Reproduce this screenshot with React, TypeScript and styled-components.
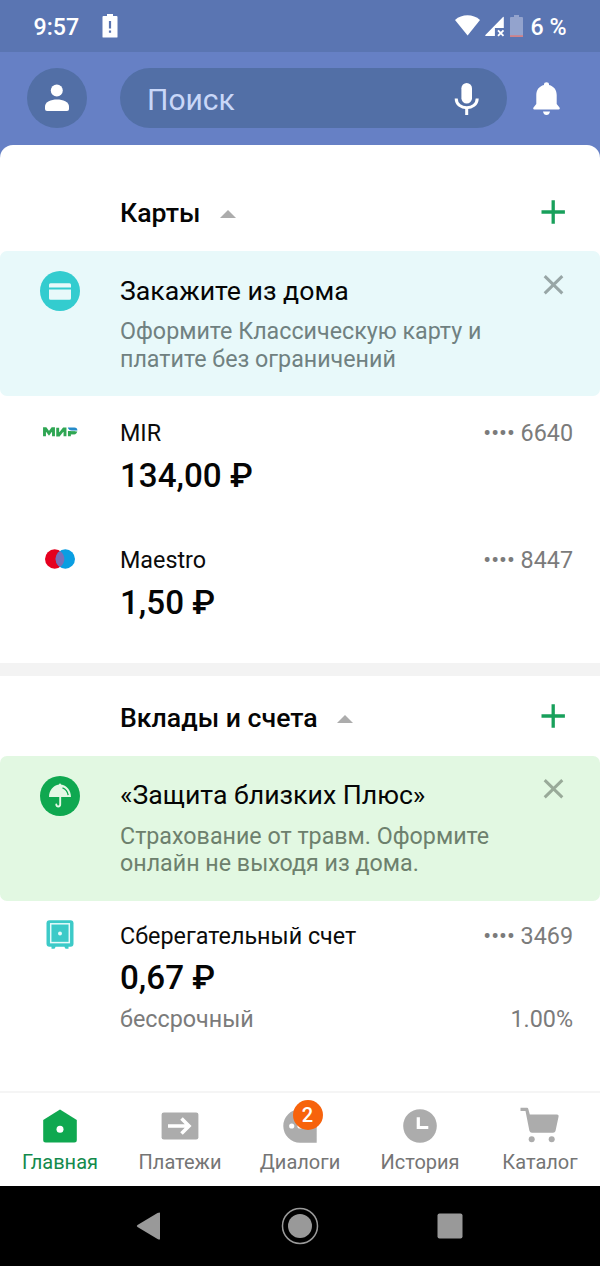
import React from 'react';
import styled, { createGlobalStyle } from 'styled-components';

const GlobalStyle = createGlobalStyle`
  * { box-sizing: border-box; }
  body { margin: 0; background: #000; }
  button { border: 0; padding: 0; background: none; font: inherit; color: inherit; }
`;

const Screen = styled.div`
  width: 600px;
  height: 1266px;
  display: flex;
  flex-direction: column;
  overflow: hidden;
  background: #fff;
  color: #050505;
  font-family: Roboto, 'Liberation Sans', sans-serif;
  svg { display: block; flex: none; }
`;

const StatusBar = styled.div`
  height: 52px;
  flex: none;
  display: flex;
  align-items: center;
  padding: 2px 33.5px 0 33.5px;
  background: #5a75b2;
  color: #fff;
  font-size: 23.2px;
  font-weight: 500;
`;

const BatteryAlert = styled.svg`
  margin: 0 0 2px 22.5px;
`;

const StatusIcons = styled.div`
  margin-left: auto;
  display: flex;
  align-items: center;
`;

const BatteryLevel = styled.svg`
  margin: 0 0 1px -6px;
`;

const BatteryText = styled.span`
  margin-left: 7.5px;
`;

const TopBar = styled.header`
  height: 113px;
  flex: none;
  margin-bottom: -20px;
  display: flex;
  align-items: flex-start;
  padding: 16px 27px 0;
  background: #6680c5;
`;

const Avatar = styled.button`
  width: 60px;
  height: 60px;
  border-radius: 50%;
  background: #526fa6;
  display: grid;
  place-items: center;
`;

const Search = styled.div`
  width: 387px;
  height: 60px;
  margin-left: 33px;
  border-radius: 30px;
  background: #526fa6;
  display: flex;
  align-items: center;
  justify-content: space-between;
  padding: 3px 26px 0 27px;
  color: #c9d7f8;
  font-size: 30px;
`;

const Bell = styled.button`
  height: 60px;
  margin-left: 26px;
  padding-top: 1px;
  display: flex;
  align-items: center;
`;

const Content = styled.main`
  flex: 1;
  min-height: 0;
  position: relative;
  overflow: hidden;
  background: #fff;
  border-radius: 13px 13px 0 0;
  padding-top: 26.4px;
`;

const SectionHeader = styled.div`
  height: 80px;
  display: flex;
  align-items: center;
  padding: 3.2px 34px 0 120px;
`;

const SectionTitle = styled.h2`
  margin: 0 19.5px 0 0;
  font-size: 26.67px;
  font-weight: 500;
  line-height: 32px;
`;

const Triangle = styled.svg`
  margin-top: 2px;
`;

const AddButton = styled.button`
  margin-left: auto;
  padding-bottom: 2.6px;
`;

const Banner = styled.div<{ $bg: string }>`
  height: 145px;
  border-radius: 7px;
  background: ${(p) => p.$bg};
  display: flex;
  padding: 20px 36px 0 40px;
`;

const BannerBody = styled.div`
  width: 400px;
  margin-left: 40px;
`;

const BannerTitle = styled.div`
  font-size: 26.67px;
  line-height: 32px;
  padding-top: 3.2px;
`;

const BannerText = styled.div<{ $color: string }>`
  margin-top: 11.9px;
  font-size: 23.25px;
  line-height: 27.3px;
  color: ${(p) => p.$color};
`;

const CloseButton = styled.button`
  margin-left: auto;
  align-self: flex-start;
  padding-top: 3.5px;
`;

const Product = styled.div<{ $top: number }>`
  height: 126.7px;
  display: flex;
  padding: ${(p) => p.$top}px 27px 0 0;
`;

const ProductIcon = styled.div`
  width: 120px;
  height: 28px;
  display: flex;
  align-items: center;
  justify-content: center;
`;

const ProductInfo = styled.div`
  flex: 1;
`;

const Line = styled.div<{ $muted?: boolean }>`
  display: flex;
  justify-content: space-between;
  font-size: 23.33px;
  line-height: 30px;
  color: ${(p) => (p.$muted ? '#7b7b7b' : '#0b0b0b')};
`;

const Muted = styled.span`
  color: #7b7b7b;
`;

const Amount = styled.div`
  font-size: 33.2px;
  font-weight: 500;
  line-height: 40px;
  margin: 7.8px 0 6px;
`;

const Divider = styled.div`
  height: 13.3px;
  margin-top: 12.9px;
  background: #f3f3f3;
`;

const TabBar = styled.nav`
  height: 95px;
  flex: none;
  display: flex;
  border-top: 2px solid #f5f5f5;
  background: #fff;
`;

const Tab = styled.button<{ $active?: boolean }>`
  width: 120px;
  display: flex;
  flex-direction: column;
  align-items: center;
  padding-top: 13px;
  font-size: 20px;
  line-height: 24px;
  color: ${(p) => (p.$active ? '#138a4c' : '#757575')};
`;

const TabIcon = styled.div`
  position: relative;
  width: 40px;
  height: 40px;
  margin-bottom: 4.4px;
`;

const Badge = styled.span`
  position: absolute;
  left: 12.5px;
  top: -6px;
  width: 30px;
  height: 30px;
  border-radius: 50%;
  background: #f7630c;
  color: #fff;
  font-size: 20px;
  font-weight: 500;
  line-height: 31px;
  text-align: center;
`;

const SystemBar = styled.footer`
  height: 80px;
  flex: none;
  display: flex;
  align-items: center;
  justify-content: center;
  gap: 117px;
  background: #000;
`;

const Collapse = () => (
  <Triangle width="16" height="8" viewBox="0 0 16 8"><path d="M0 8 8 0l8 8z" fill="#acacac" /></Triangle>
);

const Plus = () => (
  <svg width="26" height="26" viewBox="0 0 26 26"><path d="M1.500 13h23.400M13.200 1.300v23.400" stroke="#18a05b" strokeWidth="3.300" /></svg>
);

const Cross = ({ color }: { color: string }) => (
  <svg width="21" height="20" viewBox="0 0 21 20"><path d="M1.700 1.200 19.300 18.300M19.300 1.200 1.700 18.300" stroke={color} strokeWidth="3" /></svg>
);

const CardIcon = () => (
  <svg width="40" height="40" viewBox="0 0 40 40">
    <circle cx="20" cy="20" r="20" fill="#33cccf" />
    <path d="M10.500 12.300h19a1.500 1.500 0 0 1 1.500 1.500v2.700H9v-2.700a1.500 1.500 0 0 1 1.500-1.500zM9 18.500h22v8.700a1.500 1.500 0 0 1-1.500 1.500h-19A1.500 1.500 0 0 1 9 27.200z" fill="#e8f9fa" />
  </svg>
);

const UmbrellaIcon = () => (
  <svg width="40" height="40" viewBox="0 0 40 40">
    <circle cx="20" cy="20" r="20" fill="#0fa850" />
    <path d="M19 8.500a1 1 0 0 1 2 0C26.500 9.300 31 14 31 21H9C9 14 13.500 9.300 19 8.500z" fill="#e5f8e5" />
    <path d="M22.500 11.800C25.500 13 27.700 16 28.200 19.200" fill="none" stroke="#0fa850" strokeWidth="1.300" />
    <path d="M20.200 20v8.300c0 3-3.900 2.900-3.900.2" fill="none" stroke="#e5f8e5" strokeWidth="1.900" strokeLinecap="round" />
  </svg>
);

const MirLogo = () => (
  <svg width="35" height="10" viewBox="0 0 35 10">
    <g fill="none" stroke="#2fa653" strokeWidth="2.900">
      <path d="M1.500 9.200V1.700h1.100L6 6.400l3.400-4.700H10.500v7.500" />
      <path d="M14.700.8v7.300h1.200L20.800 1.900H22v7.300" />
      <path d="M26.400 4v5.200M26.400 5.700h6" />
    </g>
    <path d="M24.800.6h6.600c1.900 0 3 1.200 3 2.900h-5.500c-2.100 0-3.600-1-4.100-2.900z" fill="#258bc9" />
    <path d="M28 4.500h6.300c-.4 1.500-1.500 2.700-3 2.700H27z" fill="#2fa653" />
  </svg>
);

const MaestroLogo = () => (
  <svg width="30" height="20" viewBox="0 0 30 20">
    <circle cx="9.700" cy="10" r="9.700" fill="#e6001f" />
    <circle cx="20.300" cy="10" r="9.700" fill="#0a9ee2" />
    <path d="M15 1.900a9.700 9.700 0 0 1 0 16.200 9.700 9.700 0 0 1 0-16.200z" fill="#7a6fb8" />
  </svg>
);

const SafeIcon = () => (
  <svg width="28" height="30" viewBox="0 0 28 30">
    <rect x=".5" y=".2" width="27" height="26.500" rx="3" fill="#3ccac8" />
    <path d="M5.500 25.500h4v1.500l-1 1.700h-3zM18.500 25.500h4v3.200h-3l-1-1.700z" fill="#3ccac8" />
    <rect x="4.700" y="3.800" width="18.600" height="18.800" fill="none" stroke="#e6fafa" strokeWidth="1.500" />
    <circle cx="14" cy="13.500" r="2" fill="#e6fafa" />
  </svg>
);

export default function App() {
  return (
    <Screen>
      <GlobalStyle />
      <StatusBar>
        9:57
        <BatteryAlert width="16" height="24" viewBox="0 0 16 24">
          <path d="M5 0h6v2h3.500q1 0 1 1v20q0 .6-1 .6h-13q-1 0-1-.6V3q0-1 1-1H5z" fill="#fff" />
          <path d="M8 7v7.500M8 16.500v2.200" stroke="#5a75b2" strokeWidth="2.200" />
        </BatteryAlert>
        <StatusIcons>
          <svg width="62" height="24" viewBox="0 0 62 24">
            <path d="M1 5C8-1.200 19-1.200 26 5L13.600 20.500z" fill="#fff" />
            <path d="M49.800 2.400q0-.9-.8-.3L31.400 19.900q-.8 1.100.5 1.100h9v-8h8.900z" fill="#fff" />
            <path d="m44 15.300 5.500 5.500m0-5.500L44 20.800" stroke="#fff" strokeWidth="1.900" />
          </svg>
          <BatteryLevel width="13" height="23" viewBox="0 0 13 23">
            <path d="M4 0h5v2h3q1 0 1 1v19H0V3q0-1 1-1h3z" fill="#93a3cd" />
            <path d="M0 20.200h13V22H0z" fill="#cf8289" />
          </BatteryLevel>
          <BatteryText>6 %</BatteryText>
        </StatusIcons>
      </StatusBar>

      <TopBar>
        <Avatar aria-label="Профиль">
          <svg width="24" height="28" viewBox="0 0 24 28">
            <circle cx="11.800" cy="6.500" r="6" fill="#fff" />
            <path d="M0 22.500C0 13 24 13 24 22.500V25q0 2-2 2H2q-2 0-2-2z" fill="#fff" />
          </svg>
        </Avatar>
        <Search>
          Поиск
          <svg width="28" height="34" viewBox="0 0 28 34">
            <rect x="8.400" y="0" width="10.600" height="20.500" rx="5.300" fill="#fff" />
            <path d="M3.200 15.500c0 12.300 21 12.300 21 0M13.700 24.500V32" fill="none" stroke="#fff" strokeWidth="3" />
          </svg>
        </Search>
        <Bell aria-label="Уведомления">
          <svg width="27" height="34" viewBox="0 0 27 34">
            <path d="M11 3V2q0-1.700 2.500-1.700T16 2v1c5 1.300 7.700 5 7.700 10v9l2.800 3.500q.9 2-.9 2H1.400q-1.800 0-.9-2L3.300 22v-9c0-5 2.700-8.700 7.700-10zM10 29.500h7q-.7 3.500-3.500 3.500T10 29.500z" fill="#fff" />
          </svg>
        </Bell>
      </TopBar>

      <Content>
        <SectionHeader>
          <SectionTitle>Карты</SectionTitle>
          <Collapse />
          <AddButton aria-label="Добавить"><Plus /></AddButton>
        </SectionHeader>
        <Banner $bg="#e8f9fa">
          <CardIcon />
          <BannerBody>
            <BannerTitle>Закажите из дома</BannerTitle>
            <BannerText $color="#708181">Оформите Классическую карту и<br />платите без ограничений</BannerText>
          </BannerBody>
          <CloseButton aria-label="Закрыть"><Cross color="#98a6a6" /></CloseButton>
        </Banner>
        <Product $top={21.9}>
          <ProductIcon><MirLogo /></ProductIcon>
          <ProductInfo>
            <Line>MIR<Muted>•••• 6640</Muted></Line>
            <Amount>134,00 ₽</Amount>
          </ProductInfo>
        </Product>
        <Product $top={21.9}>
          <ProductIcon><MaestroLogo /></ProductIcon>
          <ProductInfo>
            <Line>Maestro<Muted>•••• 8447</Muted></Line>
            <Amount>1,50 ₽</Amount>
          </ProductInfo>
        </Product>
        <Divider />
        <SectionHeader>
          <SectionTitle>Вклады и счета</SectionTitle>
          <Collapse />
          <AddButton aria-label="Добавить"><Plus /></AddButton>
        </SectionHeader>
        <Banner $bg="#e2f8e2">
          <UmbrellaIcon />
          <BannerBody>
            <BannerTitle>«Защита близких Плюс»</BannerTitle>
            <BannerText $color="#6d806d">Страхование от травм. Оформите<br />онлайн не выходя из дома.</BannerText>
          </BannerBody>
          <CloseButton aria-label="Закрыть"><Cross color="#99aa99" /></CloseButton>
        </Banner>
        <Product $top={19.6}>
          <ProductIcon><SafeIcon /></ProductIcon>
          <ProductInfo>
            <Line>Сберегательный счет<Muted>•••• 3469</Muted></Line>
            <Amount>0,67 ₽</Amount>
            <Line $muted><span>бессрочный</span><span>1.00%</span></Line>
          </ProductInfo>
        </Product>
      </Content>

      <TabBar>
        <Tab $active>
          <TabIcon>
            <svg width="40" height="40" viewBox="0 0 40 40">
              <path d="M20 3.500 36.800 14v20q0 2.500-2.500 2.500H5.700Q3.200 36.500 3.200 34V14z" fill="#0fa850" />
              <circle cx="20" cy="23.300" r="3.500" fill="#fff" />
            </svg>
          </TabIcon>
          Главная
        </Tab>
        <Tab>
          <TabIcon>
            <svg width="40" height="40" viewBox="0 0 40 40">
              <rect x="1.600" y="6.600" width="36.800" height="26.800" rx="2.200" fill="#acacac" />
              <path d="M8 20h21M21.500 12.500 29 20l-7.500 7.500" fill="none" stroke="#fff" strokeWidth="3.600" />
            </svg>
          </TabIcon>
          Платежи
        </Tab>
        <Tab>
          <TabIcon>
            <svg width="40" height="40" viewBox="0 0 40 40">
              <path d="M36.700 36.700H20A16.700 16.700 0 1 1 36.700 20z" fill="#acacac" />
              <circle cx="11.700" cy="20" r="2.600" fill="#fff" />
              <circle cx="20" cy="20" r="2.600" fill="#fff" />
            </svg>
            <Badge>2</Badge>
          </TabIcon>
          Диалоги
        </Tab>
        <Tab>
          <TabIcon>
            <svg width="40" height="40" viewBox="0 0 40 40">
              <circle cx="20" cy="20" r="16.800" fill="#acacac" />
              <path d="M18.300 11.300v10.200h10" fill="none" stroke="#fff" strokeWidth="3.200" />
            </svg>
          </TabIcon>
          История
        </Tab>
        <Tab>
          <TabIcon>
            <svg width="40" height="40" viewBox="0 0 40 40">
              <path d="M.5 1.700H7Q8 1.700 8.300 3l1.500 5.500H37q2 0 1.600 2L35.500 25q-.5 1.800-2.500 1.800H12q-2 0-2.600-2L5.500 5H.5z" fill="#acacac" />
              <circle cx="11.700" cy="33.300" r="3" fill="#acacac" />
              <circle cx="31.700" cy="33.300" r="3" fill="#acacac" />
            </svg>
          </TabIcon>
          Каталог
        </Tab>
      </TabBar>

      <SystemBar>
        <svg width="28" height="30" viewBox="0 0 28 30">
          <path d="M1.500 14 21.500 2q2.500-1 2.500 0v26q0 1-2.500 0L1.500 16q-1.500-1 0-2z" fill="#999" />
        </svg>
        <svg width="38" height="38" viewBox="0 0 38 38">
          <circle cx="19" cy="19" r="17.500" fill="none" stroke="#999" strokeWidth="1.500" />
          <circle cx="19" cy="19" r="12" fill="#999" />
        </svg>
        <svg width="28" height="28" viewBox="0 0 28 28"><rect x="1.500" y="1.500" width="25" height="25" rx="2" fill="#999" /></svg>
      </SystemBar>
    </Screen>
  );
}
